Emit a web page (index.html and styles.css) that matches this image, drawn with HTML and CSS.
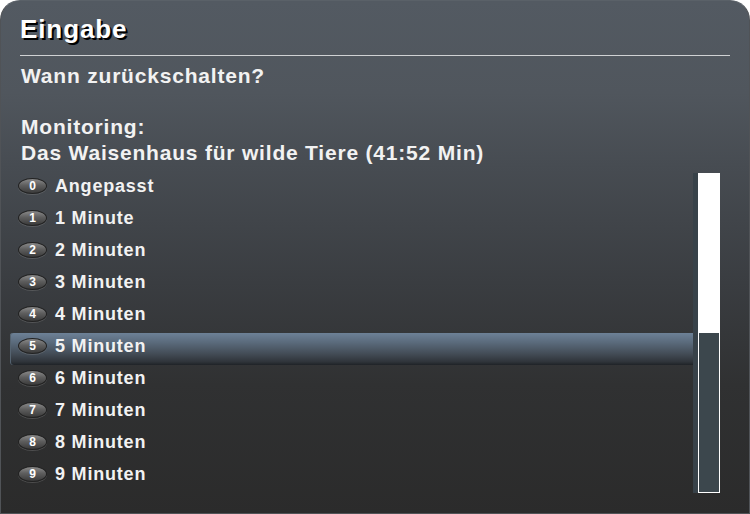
FILE: index.html
```html
<!DOCTYPE html>
<html>
<head>
  <meta charset="UTF-8">
  <title>Eingabe</title>
  <link rel="stylesheet" href="styles.css">
</head>
<body>
  <div class="window">
    <h1 class="title">Eingabe</h1>
    <div class="rule"></div>
    <div class="message">
      <p>Wann zurückschalten?</p>
      <p>&nbsp;</p>
      <p>Monitoring:</p>
      <p>Das Waisenhaus für wilde Tiere (41:52 Min)</p>
    </div>

    <div class="choices">
      <ul class="list">
        <li class="item"><span class="key">0</span>Angepasst</li>
        <li class="item"><span class="key">1</span>1 Minute</li>
        <li class="item"><span class="key">2</span>2 Minuten</li>
        <li class="item"><span class="key">3</span>3 Minuten</li>
        <li class="item"><span class="key">4</span>4 Minuten</li>
        <li class="item selected"><span class="key">5</span>5 Minuten</li>
        <li class="item"><span class="key">6</span>6 Minuten</li>
        <li class="item"><span class="key">7</span>7 Minuten</li>
        <li class="item"><span class="key">8</span>8 Minuten</li>
        <li class="item"><span class="key">9</span>9 Minuten</li>
      </ul>
      <div class="scrollbar">
        <div class="track">
          <div class="thumb"></div>
        </div>
      </div>
    </div>
  </div>
</body>
</html>
```

FILE: styles.css
```css
body {
  margin: 0;
  background-color: #ffffff;
  font-family: "Liberation Sans", Arial, sans-serif;
  font-weight: bold;
  color: #f0f0f0;
}
.window {
  width: 750px;
  height: 514px;
  box-sizing: border-box;
  border: 1px solid #505357;
  border-top-color: #5a6168;
  border-radius: 20px 20px 0 0;
  background: linear-gradient(#535a62 0%, #50565d 18%, #474c52 32%, #3a3d41 55%, #303132 75%, #2b2b2b 100%);
  overflow: hidden;
}
.title {
  margin: 0;
  padding: 13px 0 0 19px;
  height: 32px;
  font-size: 26px;
  line-height: 30px;
  letter-spacing: 0.9px;
  color: #ffffff;
  text-shadow: 2px 2px 0 #000000;
}
.rule {
  margin: 9px 19px 0 19px;
  height: 1px;
  background-color: #d0d2d4;
}
.message {
  padding: 7px 0 0 20px;
  font-size: 21px;
  letter-spacing: 0.8px;
  color: #f2f2f2;
}
.message p {
  margin: 0;
  height: 25.7px;
  line-height: 25.7px;
}
.choices {
  display: flex;
  margin: 7px 0 0 9px;
  height: 320px;
}
.list {
  list-style: none;
  margin: 0;
  padding: 0;
  width: 683px;
}
.item {
  display: flex;
  align-items: center;
  height: 32px;
  box-sizing: border-box;
  padding: 0 0 5px 8px;
  font-size: 18px;
  letter-spacing: 0.8px;
  color: #f2f2f2;
}
.item.selected {
  border-radius: 3px 0 0 3px;
  background: linear-gradient(#6d8197 0%, #5a6a7b 30%, #434c56 65%, #2f343a 90%, #1f2327 100%);
  box-shadow: inset 1px 0 0 #556370;
}
.key {
  display: flex;
  flex-shrink: 0;
  align-items: center;
  justify-content: center;
  width: 29px;
  height: 16px;
  margin-right: 8px;
  border-radius: 50%;
  box-sizing: border-box;
  border: 1px solid #222222;
  background: linear-gradient(#8a8a8a 0%, #5e5e5e 45%, #3a3a3a 100%);
  box-shadow: 0 1px 0 rgba(140, 140, 140, 0.35);
  font-size: 12px;
  letter-spacing: 0;
  color: #ffffff;
}
.scrollbar {
  display: flex;
  width: 27px;
  padding-left: 5px;
  box-sizing: border-box;
  background-color: #384249;
}
.track {
  flex: 1;
  display: flex;
  flex-direction: column;
  border: 1px solid #ffffff;
  background-color: #ffffff;
}
.thumb {
  flex: 1;
  margin-top: 159px;
  background-color: #3c474d;
}
```
